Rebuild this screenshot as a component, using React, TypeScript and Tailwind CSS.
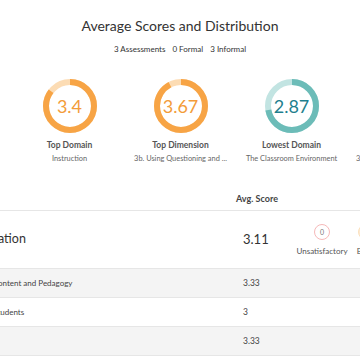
const stats = [
  { value: "3.4", pct: 0.85, label: "Top Domain", sub: "Instruction", color: "#f7a445", light: "#fcdcb4", text: "#f39c3a" },
  { value: "3.67", pct: 0.9175, label: "Top Dimension", sub: "3b. Using Questioning and ...", color: "#f7a445", light: "#fcdcb4", text: "#f39c3a" },
  { value: "2.87", pct: 0.7175, label: "Lowest Domain", sub: "The Classroom Environment", color: "#6cbcb8", light: "#c2e4e2", text: "#1f7f8e" },
  { value: "2.5", pct: 0.625, label: "Lowest Dimension", sub: "3b. Using Questioning and ...", color: "#6cbcb8", light: "#c2e4e2", text: "#1f7f8e" },
];

const rows = [
  { name: "1a. Demonstrating Knowledge of Content and Pedagogy", score: "3.33", shade: true },
  { name: "1b. Demonstrating Knowledge of Students", score: "3", shade: false },
  { name: "1c. Setting Instructional Outcomes", score: "3.33", shade: true },
];

const levels = [
  { n: 0, label: "Unsatisfactory", ring: "#f6b9b9", fill: "transparent" },
  { n: 1, label: "Basic", ring: "#fbe0bd", fill: "#fdebd4" },
];

function Donut({ pct, color, light, value, text }: { pct: number; color: string; light: string; value: string; text: string }) {
  const r = 24;
  const c = 2 * Math.PI * r;
  return (
    <div className="relative w-[54px] h-[54px]">
      <svg width="54" height="54" viewBox="0 0 54 54" className="-rotate-90">
        <circle cx="27" cy="27" r={r} fill="none" stroke={light} strokeWidth="6" />
        <circle
          cx="27"
          cy="27"
          r={r}
          fill="none"
          stroke={color}
          strokeWidth="6"
          strokeDasharray={`${c * pct} ${c}`}
        />
      </svg>
      <div className="absolute inset-0 flex items-center justify-center text-[18px]" style={{ color: text }}>
        {value}
      </div>
    </div>
  );
}

export default function App() {
  return (
    <div className="w-[360px] h-[360px] overflow-hidden bg-white text-[#444] font-['Lato','Liberation_Sans',sans-serif]">
      <h1 className="pt-[14px] text-center text-[14px] leading-[24px] text-[#333]">Average Scores and Distribution</h1>
      <p className="mt-[5px] flex justify-center gap-[7px] text-[8px] leading-[12px] text-[#333]">
        <span>3 Assessments</span>
        <span>0 Formal</span>
        <span>3 Informal</span>
      </p>

      <div className="mt-[24px] flex pl-[14px]">
        {stats.map((s) => (
          <div key={s.label} className="w-[111px] shrink-0 flex flex-col items-center">
            <Donut pct={s.pct} color={s.color} light={s.light} value={s.value} text={s.text} />
            <div className="mt-[5px] text-[8.5px] leading-[14px] font-bold text-[#555] whitespace-nowrap">{s.label}</div>
            <div className="mt-px text-[7.4px] leading-[12px] text-[#666] whitespace-nowrap">{s.sub}</div>
          </div>
        ))}
      </div>

      <div className="ml-[-125px] w-[600px]">
        <div className="mt-[27px] flex border-b border-[#e6e6e6] pb-[4px]">
          <div className="w-[361px]" />
          <div className="text-[9px] leading-[14px] font-bold text-[#444]">Avg. Score</div>
        </div>

        <div className="flex h-[58px] items-center border-b border-[#e6e6e6]">
          <div className="w-[368px] text-[12.5px] text-[#333]">1. Planning and Preparation</div>
          <div className="w-[57px] text-[13px] text-[#333]">3.11</div>
          <div className="flex mt-[1px]">
            {levels.map((l) => (
              <div key={l.label} className="w-[44px] flex flex-col items-center">
                <div
                  className="w-[16px] h-[16px] rounded-full border-[1.5px] flex items-center justify-center text-[7px] text-[#777]"
                  style={{ borderColor: l.ring, backgroundColor: l.fill }}
                >
                  {l.n}
                </div>
                <div className="mt-[6px] text-[8px] leading-[10px] text-[#555] whitespace-nowrap">{l.label}</div>
              </div>
            ))}
          </div>
        </div>

        {rows.map((r) => (
          <div
            key={r.name}
            className={`flex h-[29px] items-center border-b border-[#e6e6e6] ${r.shade ? "bg-[#f4f4f4]" : "bg-white"}`}
          >
            <div className="w-[368px] text-[8px] text-[#444]">{r.name}</div>
            <div className="text-[8.5px] text-[#444]">{r.score}</div>
          </div>
        ))}
      </div>
    </div>
  );
}
